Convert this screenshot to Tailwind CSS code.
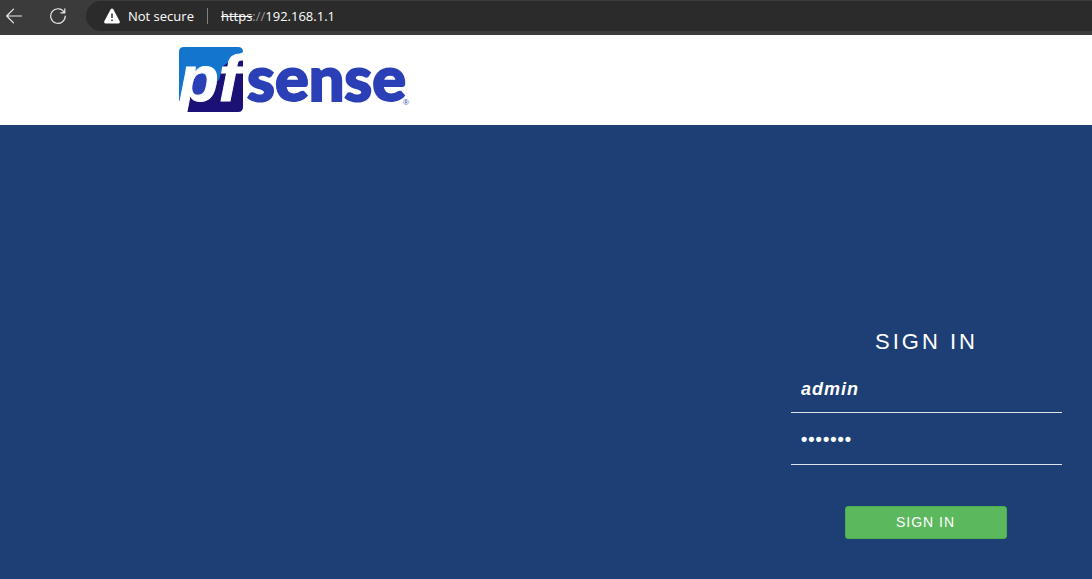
<!DOCTYPE html>
<html lang="en">
<head>
<meta charset="utf-8">
<meta name="viewport" content="width=device-width, initial-scale=1">
<title>pfSense - Login</title>
<script src="https://cdn.jsdelivr.net/npm/@tailwindcss/browser@4"></script>
</head>
<body class="flex min-h-screen flex-col bg-[#1e3f75] font-['Liberation_Sans',sans-serif] text-white">
<nav class="flex h-[35px] shrink-0 items-center bg-[#3b3b3b] font-['Open_Sans',sans-serif] text-[13px]" aria-label="Browser">
  <button type="button" aria-label="Back" class="mb-1 ml-1.5">
    <svg class="size-4" viewBox="0 0 16 16" fill="none" stroke="#e8e8e8" stroke-width="1.2" stroke-linecap="round" stroke-linejoin="round"><path d="M15.5 8H.7M7.5 1.2.7 8l6.8 6.8"/></svg>
  </button>
  <button type="button" aria-label="Reload" class="mb-1 ml-7">
    <svg class="size-4" viewBox="0 0 16 16" fill="none" stroke="#e8e8e8" stroke-width="1.2" stroke-linecap="round" stroke-linejoin="round"><path d="M14.2 4.2A7.3 7.3 0 1 0 15.3 8M14.8.8v4h-4"/></svg>
  </button>
  <div class="mb-1 ml-5 flex h-[30px] flex-1 items-center rounded-l-full bg-[#2b2b2b] pl-[18px]">
    <svg class="size-4" viewBox="0 0 16 16"><path d="M6.7 1.3a1.5 1.5 0 0 1 2.6 0l6.4 12a1.4 1.4 0 0 1-1.3 2.1H1.600A1.400 1.400 0 0 1 .3 13.300z" fill="#fff"/><path d="M8 5.500v4.500M8 11.500v1.500" stroke="#2b2b2b" stroke-width="1.500"/></svg>
    <span class="ml-2 pt-0.5">Not secure</span>
    <span class="ml-[13px] h-4 w-px bg-[#808080]"></span>
    <a href="#" class="ml-[13px] pt-0.5"><span class="line-through">https</span><span class="text-[#999]">://</span>192.168.1.1</a>
  </div>
</nav>
<header class="h-[90px] shrink-0 bg-white pl-[170px]">
  <svg class="h-[90px] w-[250px]" viewBox="0 -5 250 90" role="img" aria-label="pfSense">
    <path d="M9 61V12q0-5 5-5h54q5 0 5 5l-14 8-9 42H18z" fill="#1475cf"/>
    <path d="M62 20h11v47q0 5-5 5H15l5-20 15-2 14-10 4-14z" fill="#1b1075"/>
    <ellipse cx="29" cy="45" rx="10" ry="12" fill="#2b3fb6"/>
    <text x="9" y="61" font-family="Liberation Sans, sans-serif" font-size="65" font-weight="700" font-style="italic" fill="#fff" stroke="#fff">pf</text>
    <text x="77" y="61" font-family="Lato, sans-serif" font-size="63" font-weight="900" fill="#2b3fb6" stroke="#2b3fb6" stroke-width="2">sense</text>
    <text x="233" y="65" font-family="Liberation Sans, sans-serif" font-size="8" fill="#2b3fb6">®</text>
  </svg>
</header>
<main class="flex flex-1 flex-col items-end pr-[30px] pt-[203px]">
  <form class="flex w-[271px] flex-col items-center">
    <h1 class="text-[22px] leading-7 tracking-[3px]">SIGN IN</h1>
    <input aria-label="Username" type="text" value="admin" class="mt-2 h-[49px] w-full border-b border-[#dfe4ec] bg-transparent px-2.5 pt-0.5 text-lg font-bold italic tracking-[1px] outline-none">
    <input aria-label="Password" type="password" value="pfsense" class="h-[52px] w-full border-b border-[#dfe4ec] bg-transparent px-2.5 pt-0.5 text-lg font-bold tracking-[1px] outline-none">
    <button type="submit" class="mr-0.5 mt-[41px] h-[33px] w-[162px] rounded-[3px] border border-[#4cae4c] bg-[#5cb85c] pb-0.5 text-sm tracking-[1px]">SIGN IN</button>
  </form>
</main>
</body>
</html>
